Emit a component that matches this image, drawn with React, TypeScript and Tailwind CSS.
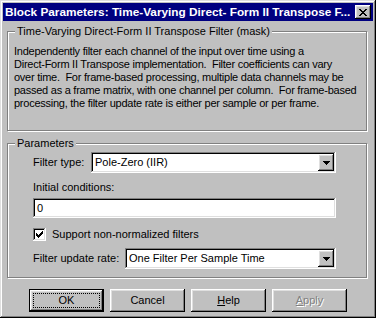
import React from "react";

const raised =
  "shadow-[inset_-1px_-1px_#000,inset_1px_1px_#fff,inset_-2px_-2px_#808080,inset_2px_2px_#dfdfdf]";
const sunken =
  "shadow-[inset_-1px_-1px_#fff,inset_1px_1px_#808080,inset_-2px_-2px_#dfdfdf,inset_2px_2px_#000]";
const etched =
  "border border-[#808080] shadow-[inset_1px_1px_0_#fff,1px_1px_0_#fff]";

function Arrow() {
  return (
    <div className={`w-[16px] h-[17px] bg-[#c0c0c0] ${raised} flex items-center justify-center`}>
      <svg width="7" height="4" viewBox="0 0 7 4" shapeRendering="crispEdges">
        <path d="M0 0h7v1H0zM1 1h5v1H1zM2 2h3v1H2zM3 3h1v1H3z" fill="#000" />
      </svg>
    </div>
  );
}

function Select({ value, width }: { value: string; width: number }) {
  return (
    <div
      className={`h-[21px] bg-white ${sunken} flex items-center pl-[4px] pr-[2px]`}
      style={{ width }}
    >
      <span className="flex-1 text-black">{value}</span>
      <Arrow />
    </div>
  );
}

function Btn({
  children,
  def,
  disabled,
}: {
  children: React.ReactNode;
  def?: boolean;
  disabled?: boolean;
}) {
  if (def) {
    return (
      <div className="w-[75px] h-[23px] border border-black bg-[#c0c0c0]">
        <div className={`w-full h-full ${raised} p-[3px]`}>
          <div className="w-full h-full border border-dotted border-black flex items-center justify-center">
            {children}
          </div>
        </div>
      </div>
    );
  }
  return (
    <div
      className={`w-[75px] h-[23px] bg-[#c0c0c0] ${raised} flex items-center justify-center ${
        disabled ? "text-[#808080] [text-shadow:1px_1px_0_#fff]" : "text-black"
      }`}
    >
      {children}
    </div>
  );
}

export default function App() {
  const lines = [
    "Independently filter each channel of the input over time using a",
    "Direct-Form II Transpose implementation.  Filter coefficients can vary",
    "over time.  For frame-based processing, multiple data channels may be",
    "passed as a frame matrix, with one channel per column.  For frame-based",
    "processing, the filter update rate is either per sample or per frame.",
  ];
  return (
    <div className="w-[376px] h-[318px] bg-[#c0c0c0] p-[3px] shadow-[inset_-1px_-1px_#000,inset_1px_1px_#dfdfdf,inset_-2px_-2px_#808080,inset_2px_2px_#fff] font-['Liberation_Sans',Arial,sans-serif] text-[11px] leading-[13px] text-black flex flex-col">
      {/* Title bar */}
      <div className="h-[18px] bg-[#000080] flex items-center pl-[2px] pr-[2px]">
        <span className="flex-1 text-white font-bold text-[11.8px] whitespace-nowrap overflow-hidden">
          Block Parameters: Time-Varying Direct- Form II Transpose F...
        </span>
        <div className={`w-[16px] h-[14px] bg-[#c0c0c0] ${raised} flex items-center justify-center`}>
          <svg width="8" height="7" viewBox="0 0 8 7" shapeRendering="crispEdges">
            <path
              d="M0 0h2v1H0zM6 0h2v1H6zM1 1h2v1H1zM5 1h2v1H5zM2 2h4v1H2zM3 3h2v1H3zM2 4h4v1H2zM1 5h2v1H1zM5 5h2v1H5zM0 6h2v1H0zM6 6h2v1H6z"
              fill="#000"
            />
          </svg>
        </div>
      </div>

      {/* Group 1 */}
      <div className={`relative mt-[10px] ml-[4px] w-[360px] h-[100px] ${etched} pl-[6px] pt-[13px]`}>
        <span className="absolute top-[-7px] left-[7px] px-[2px] bg-[#c0c0c0] whitespace-nowrap">
          Time-Varying Direct-Form II Transpose Filter (mask)
        </span>
        {lines.map((l, i) => (
          <div key={i} className="whitespace-pre tracking-[-0.25px]">
            {l}
          </div>
        ))}
      </div>

      {/* Group 2 */}
      <div className={`relative mt-[12px] ml-[4px] w-[360px] h-[135px] ${etched} pl-[25px] pt-[8px]`}>
        <span className="absolute top-[-7px] left-[7px] px-[2px] bg-[#c0c0c0] whitespace-nowrap">
          Parameters
        </span>
        <div className="flex items-center">
          <span className="w-[58px]">Filter type:</span>
          <Select value="Pole-Zero (IIR)" width={245} />
        </div>
        <div className="mt-[8px]">Initial conditions:</div>
        <div className={`mt-[4px] w-[303px] h-[20px] bg-white ${sunken} flex items-center pl-[4px]`}>
          0
        </div>
        <div className="mt-[10px] flex items-center">
          <div className={`w-[13px] h-[13px] bg-white ${sunken} flex items-center justify-center`}>
            <svg width="7" height="7" viewBox="0 0 7 7" shapeRendering="crispEdges">
              <path
                d="M6 0h1v3H6zM5 1h1v3H5zM4 2h1v3H4zM3 3h1v3H3zM2 4h1v3H2zM1 3h1v3H1zM0 2h1v3H0z"
                fill="#000"
              />
            </svg>
          </div>
          <span className="ml-[6px]">Support non-normalized filters</span>
        </div>
        <div className="mt-[7px] flex items-center">
          <span className="w-[92px]">Filter update rate:</span>
          <Select value="One Filter Per Sample Time" width={211} />
        </div>
      </div>

      {/* Buttons */}
      <div className="mt-[11px] pl-[26px] flex gap-[6px]">
        <Btn def>OK</Btn>
        <Btn>Cancel</Btn>
        <Btn>
          <span>
            <span className="underline">H</span>elp
          </span>
        </Btn>
        <Btn disabled>
          <span>
            <span className="underline">A</span>pply
          </span>
        </Btn>
      </div>
    </div>
  );
}
